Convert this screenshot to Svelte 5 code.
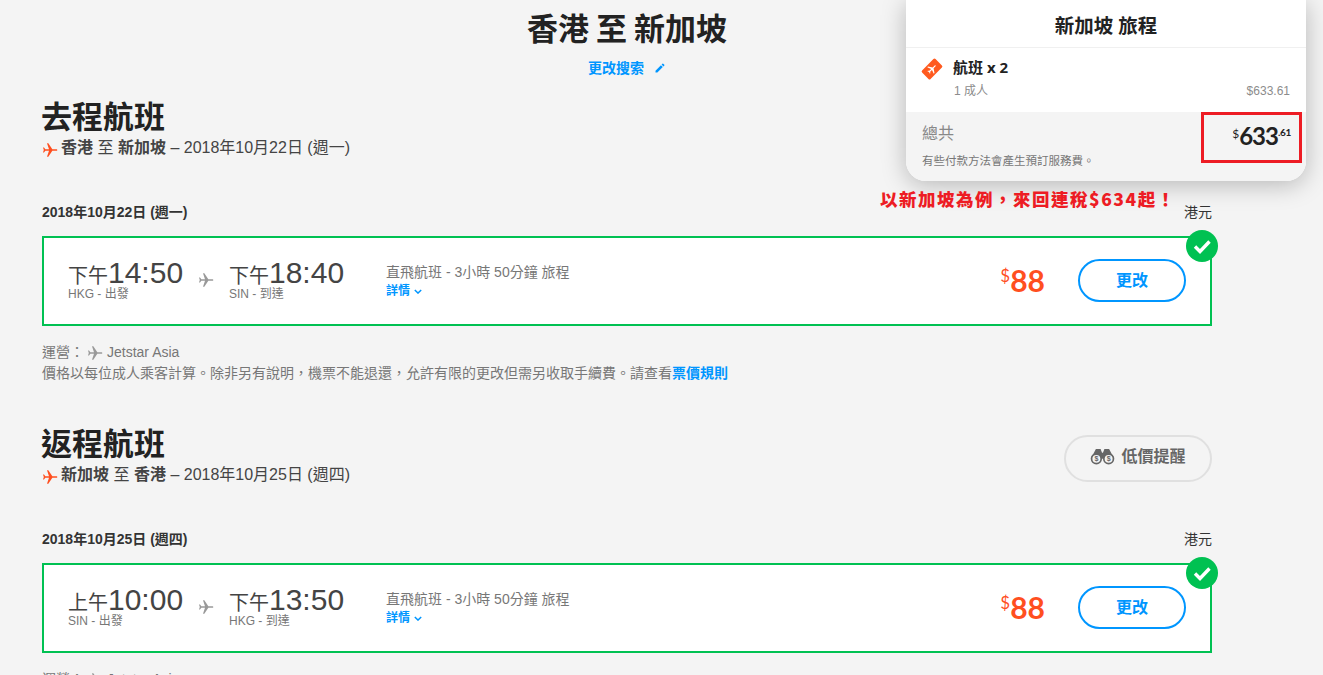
<script lang="ts">
	const legs = [
		{
			heading: '去程航班', from: '香港', to: '新加坡', date: '2018年10月22日', week: '(週一)', alert: false,
			dep: { ampm: '下午', time: '14:50', code: 'HKG - 出發' },
			arr: { ampm: '下午', time: '18:40', code: 'SIN - 到達' }
		},
		{
			heading: '返程航班', from: '新加坡', to: '香港', date: '2018年10月25日', week: '(週四)', alert: true,
			dep: { ampm: '上午', time: '10:00', code: 'SIN - 出發' },
			arr: { ampm: '下午', time: '13:50', code: 'HKG - 到達' }
		}
	];
	const plane = 'M23 12c0-.8-.7-1.300-1.500-1.300H15.500L9.500 2H7.500l3 8.700H5L3 8.200H1.500l1.200 3.800-1.200 3.800H3l2-2.500h5.500l-3 8.700h2l6-8.700h6c.8 0 1.500-.5 1.500-1.300z';
</script>

<div class="page">
	<header class="top">
		<h1>香港 至 新加坡</h1>
		<a class="edit" href="#top">更改搜索
			<svg viewBox="0 0 24 24" width="12" height="12"><path fill="#0096ff" d="M3 17.300V21h3.700L17.600 10.100l-3.700-3.700zM20.700 7c.4-.4.400-1 0-1.400l-2.300-2.300c-.4-.4-1-.4-1.400 0l-1.800 1.800 3.700 3.700z"/></svg>
		</a>
	</header>

	{#each legs as leg}
		<section class="leg">
			<div class="leg-head">
				<div>
					<h2>{leg.heading}</h2>
					<p class="route">
						<svg class="route-plane" viewBox="0 0 24 24" width="16" height="16"><path fill="#ff4f1f" d={plane}/></svg>
						<span><b>{leg.from}</b> 至 <b>{leg.to}</b> – {leg.date} {leg.week}</span>
					</p>
				</div>
				{#if leg.alert}
					<button class="alert">
						<svg viewBox="0 0 26 18" width="25" height="17">
							<path fill="#666" d="M6 1h5l1.500 4h1L15 1h5l5 9.500-12 1-12-1z"/>
							<circle cx="6.500" cy="11.500" r="6" fill="#666"/>
							<circle cx="19.500" cy="11.500" r="6" fill="#666"/>
							<circle cx="6.500" cy="11.500" r="4.200" fill="#f4f4f4"/>
							<circle cx="19.500" cy="11.500" r="4.200" fill="#f4f4f4"/>
							<text x="6.500" y="14.200" class="dollar">$</text>
							<text x="19.500" y="14.200" class="dollar">$</text>
						</svg>
						低價提醒
					</button>
				{/if}
			</div>

			<div class="day-row">
				<span class="day">{leg.date} {leg.week}</span>
				<span class="currency">港元</span>
			</div>

			<div class="card">
				<div class="stop">
					<div class="clock"><span class="ampm">{leg.dep.ampm}</span>{leg.dep.time}</div>
					<div class="code">{leg.dep.code}</div>
				</div>
				<svg class="mid-plane" viewBox="0 0 24 24" width="16" height="16"><path fill="#999" d={plane}/></svg>
				<div class="stop">
					<div class="clock"><span class="ampm">{leg.arr.ampm}</span>{leg.arr.time}</div>
					<div class="code">{leg.arr.code}</div>
				</div>
				<div class="info">
					<div>直飛航班 - 3小時 50分鐘 旅程</div>
					<a href="#top">詳情 <svg viewBox="0 0 10 6" width="8" height="5"><path d="M1 1l4 4 4-4" fill="none" stroke="#0096ff" stroke-width="1.800"/></svg></a>
				</div>
				<div class="price"><sup>$</sup>88</div>
				<button class="change">更改</button>
				<span class="tick">
					<svg viewBox="0 0 32 32" width="32" height="32"><path d="M9 16.500l5 5 9.500-10" fill="none" stroke="#fff" stroke-width="3.400"/></svg>
				</span>
			</div>

			<div class="notes">
				<div class="carrier">運營：<svg viewBox="0 0 24 24" width="16" height="16"><path fill="#999" d={plane}/></svg><span>Jetstar Asia</span></div>
				<div>價格以每位成人乘客計算。除非另有說明，機票不能退還，允許有限的更改但需另收取手續費。請查看<a href="#top">票價規則</a></div>
			</div>
		</section>
	{/each}

	<aside class="summary">
		<h3>新加坡 旅程</h3>
		<div class="line">
			<div class="line-title">
				<svg viewBox="0 0 22 22" width="22" height="22">
					<rect x="1.500" y="5" width="19" height="12" rx="1.500" fill="#ff5a1f" transform="rotate(-45 11 11)"/>
					<g transform="rotate(-45 11 11) translate(5.500 5.500) scale(.46)"><path fill="#fff" d={plane}/></g>
				</svg>
				航班 x 2
			</div>
			<div class="line-sub"><span>1 成人</span><span>$633.61</span></div>
		</div>
		<div class="total">
			<div>
				<div class="total-label">總共</div>
				<div class="total-note">有些付款方法會產生預訂服務費。</div>
			</div>
			<div class="total-price"><sup>$</sup>633<sup class="cents">.61</sup></div>
		</div>
		<div class="redbox"></div>
	</aside>
	<div class="promo">以新加坡為例，來回連稅$634起！</div>
</div>

<style>
	:global(html), :global(body) {
		margin: 0;
		height: 675px;
		overflow: hidden;
		background: #f4f4f4;
	}

	.page {
		position: relative;
		box-sizing: border-box;
		width: 1323px;
		padding: 0 111px 0 42px;
		font-family: "Liberation Sans", "Noto Sans CJK TC", sans-serif;
		color: #666;
	}

	.top {
		text-align: center;
		padding-top: 6px;
	}

	h1 {
		margin: 0;
		font-size: 31px;
		word-spacing: -1px;
		line-height: 44px;
		font-weight: 700;
		color: #222;
		font-family: "Open Sans", "Noto Sans CJK TC", sans-serif;
	}

	.edit {
		display: block;
		margin-top: 8px;
		font-size: 14px;
		line-height: 20px;
		font-weight: 700;
		color: #0096ff;
		text-decoration: none;
	}

	.edit svg {
		margin-left: 6px;
		vertical-align: -1px;
	}

	.leg {
		height: 327px;
		padding-top: 19px;
		box-sizing: border-box;
	}

	.leg-head {
		display: flex;
		justify-content: space-between;
		align-items: flex-end;
		height: 63px;
	}

	h2 {
		margin: 0 0 -1px -1px;
		font-size: 31px;
		line-height: 38px;
		color: #222;
	}

	.route {
		display: flex;
		align-items: center;
		gap: 3px;
		margin: 0;
		font-size: 16px;
		line-height: 24px;
		color: #444;
	}

	.route b {
		font-weight: 700;
	}

	.route-plane {
		margin-top: 3px;
		flex: none;
	}

	.alert {
		box-sizing: border-box;
		display: flex;
		align-items: center;
		justify-content: center;
		gap: 6px;
		width: 148px;
		height: 47px;
		margin-bottom: 5px;
		padding: 0 0 8px;
		border: 2px solid #e0e0e0;
		border-radius: 24px;
		background: transparent;
		color: #666;
		font: 700 16px "Liberation Sans", "Noto Sans CJK TC", sans-serif;
	}

	.alert svg {
		margin-top: 4px;
	}

	.dollar {
		font: 700 7.500px "Liberation Sans", sans-serif;
		fill: #666;
		text-anchor: middle;
	}

	.day-row {
		display: flex;
		justify-content: space-between;
		align-items: center;
		margin-top: 42px;
		line-height: 20px;
		font-size: 14px;
		color: #333;
	}

	.day {
		font-weight: 700;
	}

	.card {
		position: relative;
		box-sizing: border-box;
		display: flex;
		align-items: center;
		height: 90px;
		margin-top: 14px;
		padding: 0 24px 4px 24px;
		background: #fff;
		border: 2px solid #00c152;
	}

	.stop {
		width: 116px;
		margin-top: -2px;
	}

	.clock {
		font-size: 30px;
		line-height: 34px;
		color: #444;
		white-space: nowrap;
	}

	.ampm {
		font-size: 20px;
	}

	.code {
		font-size: 12px;
		line-height: 14px;
		color: #777;
		margin-top: -6px;
	}

	.mid-plane {
		margin: 1px 15px 0 14px;
		flex: none;
	}

	.info {
		margin: 4px 0 0 41px;
		font-size: 14px;
		line-height: 18px;
		color: #777;
	}

	.info a {
		color: #0096ff;
		font-weight: 700;
		font-size: 12px;
		text-decoration: none;
	}

	.info svg {
		vertical-align: 1px;
		margin-left: 1px;
	}

	.price {
		margin: 2px 33px 0 auto;
		font-family: "Lato", sans-serif;
		font-size: 30px;
		font-weight: 700;
		line-height: 40px;
		color: #ff4f1f;
	}

	.price sup {
		font-size: 17px;
		font-weight: 400;
		vertical-align: 10px;
		line-height: 0;
	}

	.change {
		box-sizing: border-box;
		width: 108px;
		height: 43px;
		margin-top: 2px;
		padding: 0 0 2px;
		border: 2px solid #0096ff;
		border-radius: 22px;
		background: #fff;
		color: #0096ff;
		font: 700 16px "Liberation Sans", "Noto Sans CJK TC", sans-serif;
	}

	.tick {
		position: absolute;
		top: -8px;
		right: -8px;
		width: 32px;
		height: 32px;
		border-radius: 50%;
		background: #00c152;
	}

	.tick svg {
		display: block;
	}

	.notes {
		margin-top: 16px;
		font-size: 14px;
		line-height: 21px;
		color: #777;
	}

	.carrier {
		display: flex;
		align-items: center;
		gap: 3px;
	}

	.carrier span {
		margin-left: 1px;
	}

	.notes a {
		color: #0096ff;
		font-weight: 700;
		text-decoration: none;
	}

	.summary {
		position: absolute;
		top: 0;
		left: 906px;
		width: 400px;
		height: 181px;
		background: #fff;
		border-radius: 0 0 20px 20px;
		box-shadow: 0 4px 24px rgba(0, 0, 0, 0.25);
		overflow: hidden;
		color: #222;
	}

	h3 {
		margin: 0;
		height: 48px;
		box-sizing: border-box;
		border-bottom: 1px solid #f0f0f0;
		text-align: center;
		font-size: 19.500px;
		line-height: 52px;
		font-family: "Open Sans", "Noto Sans CJK TC", sans-serif;
		font-weight: 700;
	}

	.line {
		height: 64px;
		box-sizing: border-box;
		padding: 8px 16px 0 15px;
	}

	.line-title {
		display: flex;
		align-items: center;
		gap: 10px;
		font-size: 15px;
		font-weight: 700;
		line-height: 22px;
		font-family: "Open Sans", "Noto Sans CJK TC", sans-serif;
	}

	.line-title svg {
		margin: 1.500px 0 -1.500px;
	}

	.line-sub {
		display: flex;
		justify-content: space-between;
		margin: 4px 0 0 33px;
		font-size: 12px;
		line-height: 18px;
		color: #8c8c8c;
	}

	.total {
		display: flex;
		justify-content: space-between;
		height: 69px;
		box-sizing: border-box;
		padding: 11px 15px 0 16px;
		background: #f4f4f4;
	}

	.total-label {
		font-size: 16px;
		line-height: 22px;
		color: #888;
	}

	.total-note {
		margin-top: 8px;
		font-size: 11.500px;
		line-height: 16px;
		color: #777;
	}

	.total-price {
		margin-top: -1px;
		font-family: "Lato", sans-serif;
		font-size: 24px;
		font-weight: 700;
		line-height: 28px;
		color: #222;
		letter-spacing: -1px;
	}

	.total-price sup {
		font-size: 12px;
		font-weight: 400;
		vertical-align: 7px;
		line-height: 0;
		letter-spacing: 0;
	}

	.total-price .cents {
		font-weight: 700;
		font-size: 10px;
		letter-spacing: -0.3px;
		vertical-align: 9px;
	}

	.redbox {
		position: absolute;
		left: 295px;
		top: 112px;
		width: 101px;
		height: 51px;
		box-sizing: border-box;
		border: 3px solid #ed1c24;
	}

	.promo {
		position: absolute;
		left: 880px;
		top: 187px;
		font-family: "Noto Sans CJK TC", sans-serif;
		font-size: 17.500px;
		line-height: 24px;
		font-weight: 900;
		color: #ed1c24;
		letter-spacing: 1.500px;
		white-space: nowrap;
	}
</style>
